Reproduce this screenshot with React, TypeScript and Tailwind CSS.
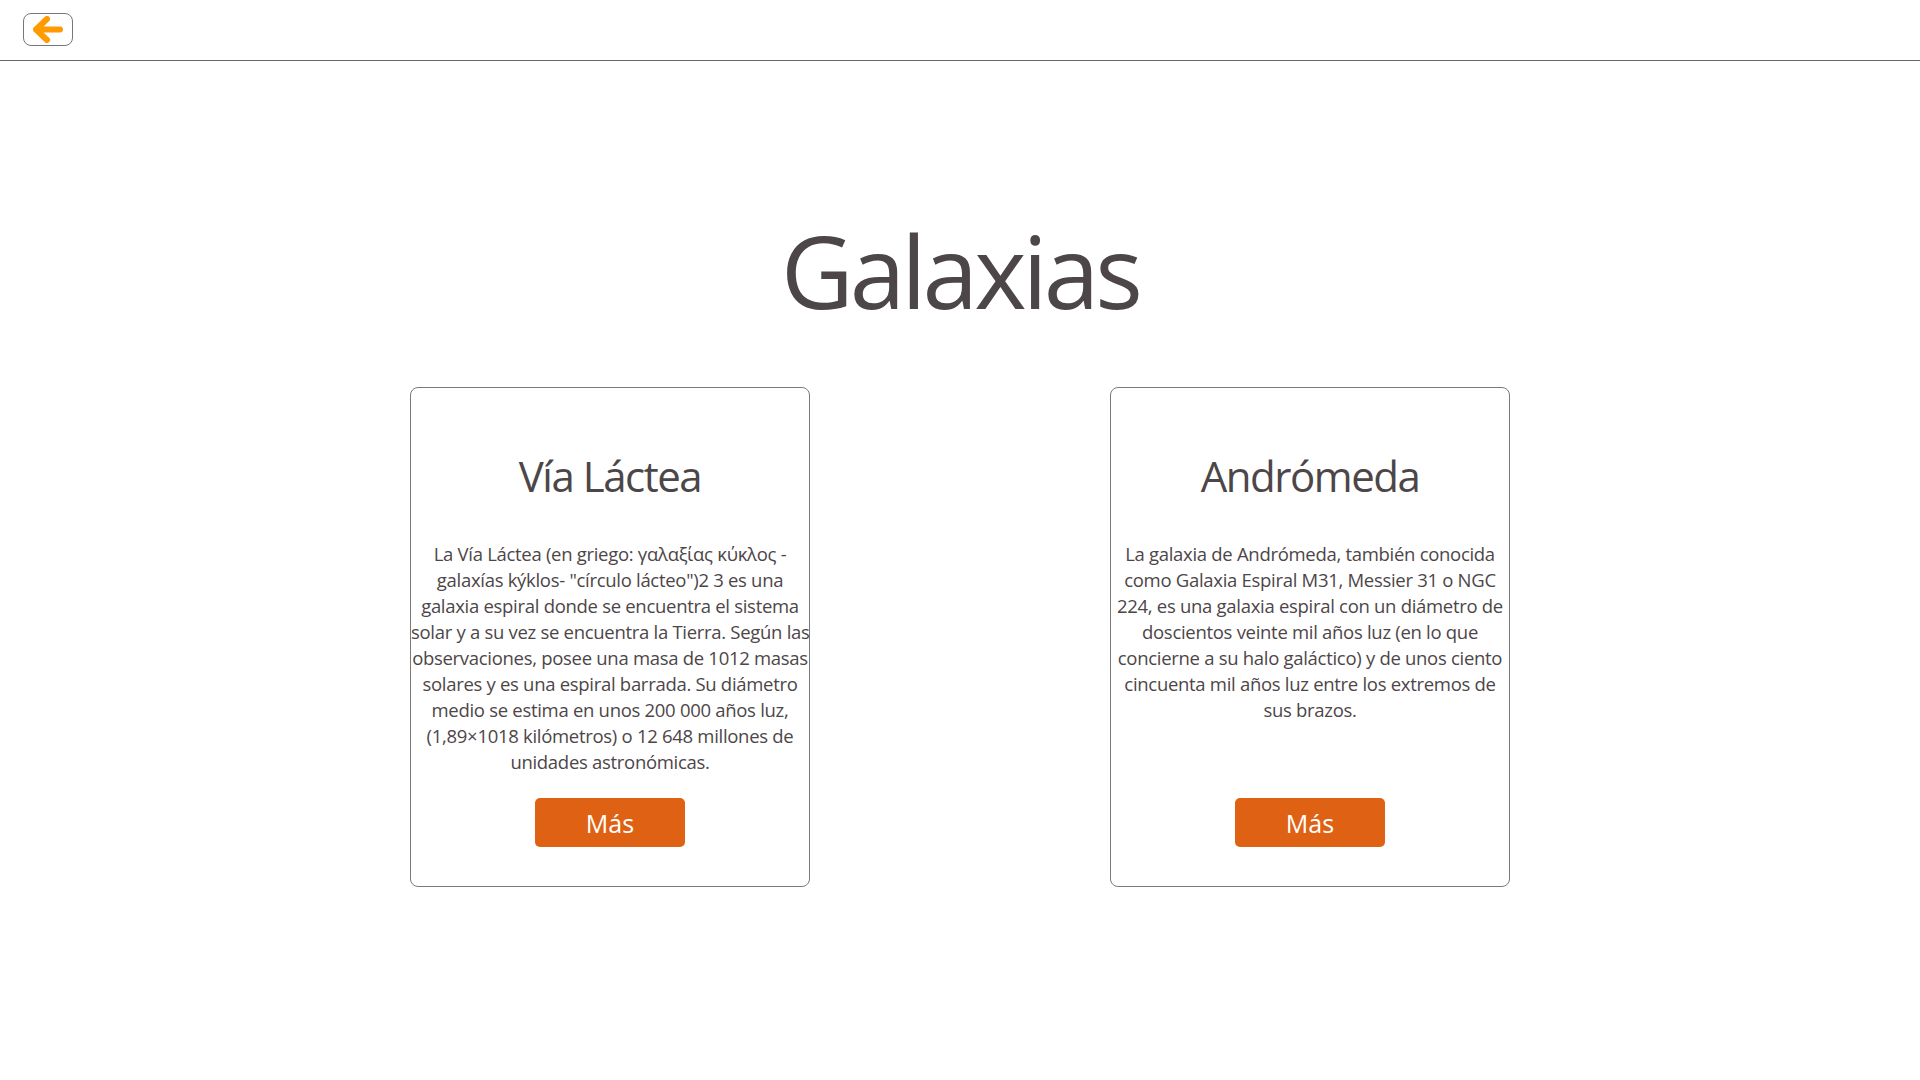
import React from 'react'

type Galaxy = {
  title: string
  lines: string[]
}

const galaxies: Galaxy[] = [
  {
    title: 'Vía Láctea',
    lines: [
      'La Vía Láctea (en griego: γαλαξίας κύκλος -',
      'galaxías kýklos- "círculo lácteo")2 3 es una',
      'galaxia espiral donde se encuentra el sistema',
      'solar y a su vez se encuentra la Tierra. Según las',
      'observaciones, posee una masa de 1012 masas',
      'solares y es una espiral barrada. Su diámetro',
      'medio se estima en unos 200 000 años luz,',
      '(1,89×1018 kilómetros) o 12 648 millones de',
      'unidades astronómicas.',
    ],
  },
  {
    title: 'Andrómeda',
    lines: [
      'La galaxia de Andrómeda, también conocida',
      'como Galaxia Espiral M31, Messier 31 o NGC',
      '224, es una galaxia espiral con un diámetro de',
      'doscientos veinte mil años luz (en lo que',
      'concierne a su halo galáctico) y de unos ciento',
      'cincuenta mil años luz entre los extremos de',
      'sus brazos.',
    ],
  },
]

function BackButton() {
  return (
    <button className="flex h-[33px] w-[50px] items-center justify-center rounded-[8px] border border-[#777] bg-white">
      <svg width="30" height="27" viewBox="0 0 30 27" fill="none">
        <path
          d="M14 3 L3 13.5 L14 24 M3 13.5 H27"
          stroke="#ff9a00"
          strokeWidth="6"
          strokeLinecap="round"
          strokeLinejoin="round"
        />
      </svg>
    </button>
  )
}

function GalaxyCard({ galaxy }: { galaxy: Galaxy }) {
  return (
    <div className="flex h-[500px] w-[400px] flex-col items-center rounded-[8px] border border-[#7a7a7a] pt-[67px] pb-[39px]">
      <h2 className="text-[42px] leading-none tracking-[-0.035em]">{galaxy.title}</h2>
      <p className="mt-[44px] w-full text-center text-[18.5px] leading-[26px] tracking-[-0.016em]">
        {galaxy.lines.map((line, i) => (
          <span key={i} className="block whitespace-nowrap">
            {line}
          </span>
        ))}
      </p>
      {/* button sits at the bottom of the card */}
      <button className="mt-auto flex h-[49px] w-[150px] items-center justify-center rounded-[5px] bg-[#df6214] pt-[3px] text-[25px] text-white">
        Más
      </button>
    </div>
  )
}

export default function App() {
  return (
    <div className="min-h-screen bg-white font-['Open_Sans',sans-serif] text-[#4d4648]">
      <header className="h-[61px] border-b border-[#666] pt-[13px] pl-[23px]">
        <BackButton />
      </header>
      <main className="flex flex-col items-center">
        <h1 className="mt-[159px] text-[100px] leading-none tracking-[-0.04em]">Galaxias</h1>
        <div className="mt-[67px] flex gap-[300px]">
          {galaxies.map((g) => (
            <GalaxyCard key={g.title} galaxy={g} />
          ))}
        </div>
      </main>
    </div>
  )
}
